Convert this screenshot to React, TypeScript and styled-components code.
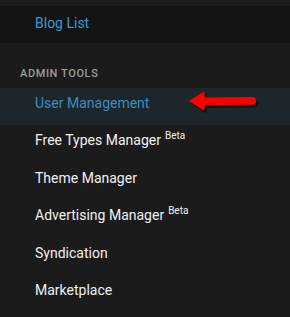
import React from "react";
import styled, { createGlobalStyle } from "styled-components";

const GlobalStyle = createGlobalStyle`
  html, body {
    margin: 0;
    padding: 0;
    background: #1b1b1b;
  }
  body {
    font-family: Roboto, "Liberation Sans", sans-serif;
  }
`;

const Sidebar = styled.nav`
  width: 290px;
  height: 317px;
  overflow: hidden;
  background: #1b1b1b;
  display: flex;
  flex-direction: column;
`;

const TopStrip = styled.div`
  height: 6px;
  background: #1e1e1e;
  border-bottom: 1px solid #111111;
`;

const SubList = styled.div`
  background: #141414;
`;

const SectionTitle = styled.div`
  height: 45px;
  padding: 24px 0 0 20px;
  box-sizing: border-box;
  color: #9c9c9c;
  font-size: 11px;
  line-height: 13px;
  font-weight: 500;
  letter-spacing: 0.6px;
  text-transform: uppercase;
`;

const Item = styled.a<{ $active?: boolean; $sub?: boolean; $tone?: "blue" | "white" }>`
  position: relative;
  display: flex;
  align-items: flex-start;
  height: ${(p) => (p.$sub ? "36px" : "37.4px")};
  box-sizing: border-box;
  padding: ${(p) => (p.$sub ? "6px" : "5px")} 0 0 35px;
  font-size: 14px;
  line-height: 20px;
  text-decoration: none;
  background: ${(p) => (p.$active ? "#1d262a" : "transparent")};
  color: ${(p) =>
    p.$tone === "blue" ? (p.$active ? "#3a8cc2" : "#3b97d3") : "#f1f1f1"};
`;

const Beta = styled.sup`
  font-size: 10px;
  line-height: 10px;
  margin-left: 4px;
  position: relative;
  top: 1px;
  vertical-align: top;
`;

const Arrow = styled.svg`
  position: absolute;
  left: 186px;
  top: 0;
  width: 78px;
  height: 28px;
`;

function PointerArrow() {
  const shape =
    "M3 13 L16.5 4.2 Q18.5 3.2 18.5 5.2 L19 9.6 L66.5 9.1 A3.8 3.8 0 0 1 66.5 16.7 L19 17.2 L18.5 21 Q18.5 23 16.5 22 Z";
  return (
    <Arrow viewBox="0 0 78 28">
      <path d={shape} fill="#000" opacity={0.6} transform="translate(2 2.5)" />
      <path d={shape} fill="#f70000" />
    </Arrow>
  );
}

const items = [
  { label: "Free Types Manager", beta: true },
  { label: "Theme Manager" },
  { label: "Advertising Manager", beta: true },
  { label: "Syndication" },
  { label: "Marketplace" },
];

export default function App() {
  return (
    <>
      <GlobalStyle />
      <Sidebar>
        <TopStrip />
        <SubList>
          <Item $tone="blue" $sub>
            Blog List
          </Item>
        </SubList>
        <SectionTitle>Admin Tools</SectionTitle>
        <Item $tone="blue" $active>
          User Management
          <PointerArrow />
        </Item>
        {items.map((it) => (
          <Item key={it.label} $tone="white">
            {it.label}
            {it.beta && <Beta>Beta</Beta>}
          </Item>
        ))}
      </Sidebar>
    </>
  );
}
